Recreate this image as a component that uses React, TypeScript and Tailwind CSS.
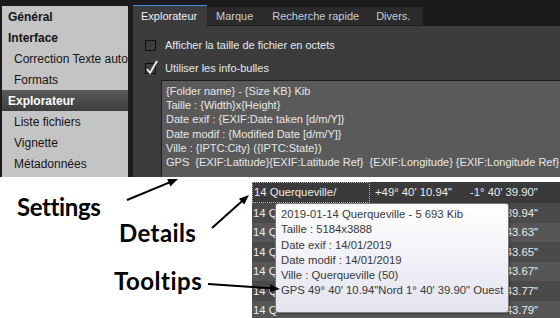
import React from "react";

const sidebar = [
  { t: "Général", bold: true },
  { t: "Interface", bold: true },
  { t: "Correction Texte auto" },
  { t: "Formats" },
  { t: "Explorateur", bold: true, sel: true },
  { t: "Liste fichiers" },
  { t: "Vignette" },
  { t: "Métadonnées" },
];

const areaLines = [
  "{Folder name} - {Size KB} Kib",
  "Taille : {Width}x{Height}",
  "Date exif : {EXIF:Date taken [d/m/Y]}",
  "Date modif : {Modified Date [d/m/Y]}",
  "Ville : {IPTC:City} ({IPTC:State})",
  "GPS  {EXIF:Latitude}{EXIF:Latitude Ref}  {EXIF:Longitude} {EXIF:Longitude Ref}",
];

const rows = ["39.94\"", "43.63\"", "43.65\"", "43.67\"", "43.77\"", "43.79\""];

const tipLines = [
  "2019-01-14 Querqueville - 5 693 Kib",
  "Taille : 5184x3888",
  "Date exif : 14/01/2019",
  "Date modif : 14/01/2019",
  "Ville : Querqueville (50)",
  "GPS 49° 40' 10.94\"Nord 1° 40' 39.90\" Ouest",
];

export default function App() {
  return (
    <div className="relative w-[560px] h-[318px] overflow-hidden bg-white font-['Liberation_Sans',Arial,sans-serif]">
      {/* Top: settings window */}
      <div className="flex h-[177px] bg-[#1b1b1b]">
        <div className="ml-[2px] mt-[6px] w-[126px] bg-[#c4c4c4] flex flex-col text-[12px] text-[#141414]">
          {sidebar.map((s) => (
            <div
              key={s.t}
              className={
                "h-[21px] shrink-0 flex items-center whitespace-nowrap " +
                (s.bold ? "pl-[6px] font-bold " : "pl-[12px] ") +
                (s.sel ? "bg-gradient-to-b from-[#5a5a5a] to-[#3e3e3e] text-white" : "")
              }
            >
              {s.t}
            </div>
          ))}
        </div>
        <div className="ml-[5px] flex-1 flex flex-col">
          <div className="h-[26px] flex items-end text-[11px]">
            <div className="h-[21px] w-[74px] pl-[8px] flex items-center bg-[#3c3c3c] border-t border-[#3f8fe0] text-[#eef2f8]">
              Explorateur
            </div>
            <div className="h-[18px] mb-[1px] flex items-center bg-[#2b2b2b] text-[#c6cedc] pr-[13px]">
              <span className="pl-[9px] pr-[10px]">Marque</span>
              <span className="pl-[9px] pr-[8px]">Recherche rapide</span>
              <span className="pl-[9px]">Divers.</span>
            </div>
          </div>
          <div className="flex-1 bg-[#3c3c3c] pt-[8px] pl-[12px] flex flex-col text-[11px] text-[#e4e9f1] min-h-0">
            <div className="h-[23px] flex items-center gap-[9px]">
              <div className="w-[11px] h-[11px] border border-[#101010]" />
              <span>Afficher la taille de fichier en octets</span>
            </div>
            <div className="h-[23px] flex items-center gap-[9px]">
              <div className="relative w-[11px] h-[11px] border border-[#101010]">
                <svg className="absolute left-[-1px] top-[-5px]" width="14" height="16" viewBox="0 0 14 16">
                  <path d="M2 10 L5 14 L12 2" fill="none" stroke="#e8e8e8" strokeWidth="2" />
                </svg>
              </div>
              <span>Utiliser les info-bulles</span>
            </div>
            <div className="ml-[16px] flex-1 bg-[#5a5a5a] border-t border-l border-[#1e1e1e] pt-[3px] pl-[4px] text-[#e8e8e8] leading-[14.2px] overflow-hidden">
              {areaLines.map((l) => (
                <div key={l} className="whitespace-pre">
                  {l}
                </div>
              ))}
            </div>
          </div>
        </div>
      </div>

      {/* Bottom: annotations and detail list */}
      <div className="flex h-[141px]">
        <div className="w-[252px] flex flex-col font-['Lato',sans-serif] font-bold text-[24px] leading-none text-black">
          <div className="mt-[18px] ml-[17px] tracking-[-0.4px]">Settings</div>
          <div className="mt-[2px] ml-[119px] tracking-[0.4px]">Details</div>
          <div className="mt-[24px] ml-[114px] tracking-[0.5px]">Tooltips</div>
        </div>
        <div className="relative flex-1 mt-[5px] flex flex-col text-[11.3px] text-[#ececec] whitespace-nowrap">
          <div className="h-[21px] shrink-0 flex items-center bg-[#3a3a3a]">
            <div className="w-[118px] h-full flex items-center pl-[1px] border border-dotted border-[#b0b0b0]">
              14 Querqueville/
            </div>
            <div className="w-[100px] pl-[5px]">+49° 40' 10.94"</div>
            <div>-1° 40' 39.90"</div>
          </div>
          {rows.map((r, i) => (
            <div
              key={i}
              className={
                (i % 2 === 0 ? "h-[20px] bg-[#4a4a4a]" : "h-[19px] bg-[#565656]") +
                " shrink-0 flex items-center"
              }
            >
              <div className="w-[26px] pl-[1px]">14 Q</div>
              <div className="w-[260px] text-right">{r}</div>
            </div>
          ))}

          {/* Tooltip */}
          <div className="absolute left-[23px] top-[21px] w-[234px] h-[110px] rounded-[3px] border border-[#7a7a7a] bg-gradient-to-b from-white to-[#e3e4ef] shadow-[1px_1px_2px_rgba(0,0,0,0.35)] pt-[3px] pl-[5px] text-[#383838] leading-[15.3px]">
            {tipLines.map((l) => (
              <div key={l}>{l}</div>
            ))}
          </div>
        </div>
      </div>

      {/* Arrows */}
      <svg className="absolute inset-0 pointer-events-none" width="560" height="318" viewBox="0 0 560 318">
        <line x1="127" y1="200" x2="169" y2="182.7" stroke="black" strokeWidth="2" />
        <polygon points="178,179 170.3,186.5 167.2,179.1" fill="black" />
        <line x1="212" y1="228" x2="241.6" y2="201.6" stroke="black" strokeWidth="2" />
        <polygon points="249,195 244.2,204.6 238.9,198.7" fill="black" />
        <line x1="208" y1="284" x2="270" y2="288.3" stroke="black" strokeWidth="2" />
        <polygon points="280,289 269.7,292.3 270.3,284.3" fill="black" />
      </svg>
    </div>
  );
}
